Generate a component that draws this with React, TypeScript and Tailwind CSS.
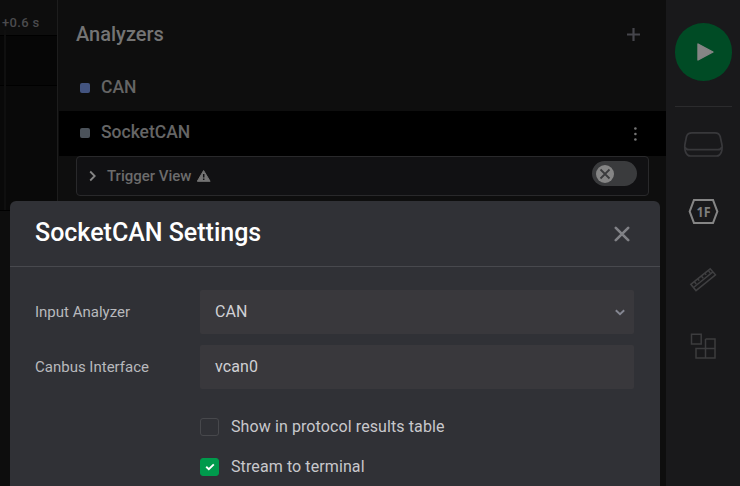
import React from "react";

function Timeline() {
  return (
    <div className="relative flex w-[57px] shrink-0 flex-col bg-[#0d0d0d]">
      <div className="h-[35px] pt-[14px] pl-[2px] text-[13px] leading-[17px] font-medium tracking-[0.35px] whitespace-nowrap text-[#4b4b4e]">
        +0.6 s
      </div>
      <div className="h-[51px] border-y border-black bg-[#060606]" />
      <div className="h-[125px] border-b border-black bg-[#090909]" />
      <div className="absolute top-[30px] left-[4px] h-[180px] w-[2px] bg-[#0f0f0f]" />
    </div>
  );
}

function AnalyzerRow({ name, swatch, selected }: { name: string; swatch: string; selected?: boolean }) {
  return (
    <div className={`flex h-[45px] items-center pl-[21px] pr-[29px] ${selected ? "bg-black" : ""}`}>
      <span className={`mb-px size-[10px] rounded-[2px] ${swatch}`} />
      <span className="ml-[11px] pb-[4px] text-[17.5px] leading-[24px] font-medium text-[#656565]">{name}</span>
      {selected && (
        <svg className="ml-auto" width="4" height="16" viewBox="0 0 4 16" fill="#747474">
          <circle cx="2.4" cy="2.5" r="1.3" />
          <circle cx="2.4" cy="8" r="1.3" />
          <circle cx="2.4" cy="13.5" r="1.3" />
        </svg>
      )}
    </div>
  );
}

function Analyzers() {
  return (
    <div className="flex w-[609px] shrink-0 flex-col border-l border-[#1d1d1d] bg-[#0e0e0e] pl-px">
      <div className="flex h-[66px] items-center justify-between pr-[26px] pl-[17px]">
        <h2 className="mt-[2px] text-[20px] leading-[28px] font-medium text-[#747474]">Analyzers</h2>
        <svg className="mt-[3px]" width="13" height="13" viewBox="0 0 13 13" stroke="#45454b" strokeWidth="2.2">
          <path d="M6.5 0V13M0 6.5H13" />
        </svg>
      </div>
      <AnalyzerRow name="CAN" swatch="bg-[#43547f]" />
      <AnalyzerRow name="SocketCAN" swatch="bg-[#4b525a]" selected />
      <div className="ml-[17px] flex h-[40px] w-[573px] items-center rounded-[4px] border border-[#29292b] bg-[#111113] pr-[11px] pl-[12px]">
        <svg width="8" height="12" viewBox="0 0 8 12" fill="none" stroke="#858585" strokeWidth="1.8">
          <path d="M1.2 1.5L5.7 6L1.2 10.5" />
        </svg>
        <span className="ml-[10px] text-[15px] leading-[20px] font-medium text-[#6c6c6c]">Trigger View</span>
        <svg className="mb-px ml-[5px]" width="14" height="12" viewBox="0 0 14 12">
          <path d="M6.6 .5L13.1 11.3H.3Z" fill="#747474" stroke="#747474" strokeLinejoin="round" />
          <path d="M6.7 4V7.6M6.7 8.6V10" stroke="#111113" strokeWidth="1.5" />
        </svg>
        <div className="mb-[5px] ml-auto flex h-[25px] w-[45px] items-center rounded-full bg-[#3a3b3d] pl-[4px]">
          <svg width="18" height="18" viewBox="0 0 18 18">
            <circle cx="9" cy="9" r="9" fill="#858585" />
            <path d="M4.5 4.5L13.5 13.5M13.5 4.5L4.5 13.5" stroke="#3a3b3d" strokeWidth="1.8" />
          </svg>
        </div>
      </div>
    </div>
  );
}

function Sidebar() {
  return (
    <div className="flex w-[74px] shrink-0 flex-col items-center bg-[#19191b] pt-[23px]">
      <div className="flex h-[58px] w-[57px] items-center justify-center rounded-full bg-[#004b25]">
        <svg className="ml-[4px]" width="17" height="18" viewBox="0 0 17 18">
          <path d="M1 1L16 9L1 17Z" fill="#858585" stroke="#858585" strokeWidth="1.4" strokeLinejoin="round" />
        </svg>
      </div>
      <div className="mt-[25px] h-px w-[57px] bg-[#2b2b2d]" />
      <svg className="mt-[24px]" width="40" height="26" viewBox="0 0 40 26" fill="none" stroke="#38383b" strokeWidth="1.7">
        <path d="M9 1.8H32C35 1.8 36.5 3 37.2 5.5L38.8 13C39.8 18 38.5 25 33.5 25H7.5C2.5 25 1.2 18 2 13L3.5 5.5C4.2 3 6 1.8 9 1.8Z" />
        <path d="M2 16C2.5 18 3.7 18.7 6 18.7H34.8C37.1 18.7 38.3 18 38.8 16" />
      </svg>
      <svg className="mt-[41px] ml-px" width="32" height="27" viewBox="0 0 32 27" fill="none" stroke="#858585">
        <path d="M6 2H25L29.3 13.5L25 25H6L1.7 13.5Z" strokeWidth="2.1" />
        <text x="15.5" y="19" textAnchor="middle" fill="#7d7d7d" stroke="none" className="font-['Noto_Sans',sans-serif] text-[15px] font-bold" textLength="14" lengthAdjust="spacingAndGlyphs">
          1F
        </text>
      </svg>
      <svg className="mt-[42px]" width="28" height="26" viewBox="0 0 28 26" fill="none" stroke="#3f3f41" strokeWidth="1.5">
        <path d="M1.8 17.3L21.2 1.8L26.5 7.8L7 23.6ZM4.5 20.5L23.9 4.9M5.2 14.5L7.2 17M8.7 11.7L10.2 13.6M12.2 8.8L14.2 11.3M15.7 6L17.2 7.9M19.2 3.4L21.2 5.9" />
      </svg>
      <svg className="mt-[40px]" width="26" height="26" viewBox="0 0 26 26" fill="none" stroke="#3c3c3e" strokeWidth="1.5">
        <path d="M1.5 1.3H11.2V11.1H1.5ZM15.5 6H25V25H6V15.5H25M15.5 6V25" />
      </svg>
    </div>
  );
}

function Field({ label, value, select }: { label: string; value: string; select?: boolean }) {
  return (
    <div className="flex items-center">
      <label className="w-[165px] text-[15px] leading-[20px] text-[#b8b9bd]">{label}</label>
      <div className="flex h-[44px] w-[434px] items-center justify-between rounded-[2px] bg-[#39383c] pr-[9px] pb-px pl-[15px] text-[16px] tracking-[0.1px] text-[#d0d0d4]">
        {value}
        {select && (
          <svg className="mt-px" width="10" height="7" viewBox="0 0 10 7" fill="none" stroke="#858792" strokeWidth="1.9">
            <path d="M.8 1.2L5 5.2L9.2 1.2" />
          </svg>
        )}
      </div>
    </div>
  );
}

function Check({ label, checked }: { label: string; checked?: boolean }) {
  return (
    <div className="ml-[165px] flex h-[20px] items-center">
      <span className={`flex h-[18px] w-[19px] items-center justify-center rounded-[3px] border ${checked ? "border-[#009a4c] bg-[#009a4c]" : "border-[#47484c]"}`}>
        {checked && (
          <svg width="10" height="8" viewBox="0 0 10 8" fill="none" stroke="white" strokeWidth="1.9">
            <path d="M1.2 3.8L3.8 6.2L8.8 1.4" />
          </svg>
        )}
      </span>
      <span className="ml-[12px] text-[16px] leading-[20px] tracking-[0.1px] text-[#c8c8cc]">{label}</span>
    </div>
  );
}

function SettingsDialog() {
  return (
    <div className="absolute top-[201px] left-[10px] h-[285px] w-[650px] overflow-hidden rounded-t-[6px] bg-[#303136]">
      <div className="flex h-[66px] items-center justify-between border-b border-[#48494e] pr-[30px] pb-[2px] pl-[25px]">
        <h1 className="text-[25px] leading-[32px] font-medium text-white">SocketCAN Settings</h1>
        <svg className="mt-[3px]" width="16" height="16" viewBox="0 0 16 16" stroke="#808186" strokeWidth="2.6" strokeLinecap="round">
          <path d="M1.8 1.8L14.2 14.2M14.2 1.8L1.8 14.2" />
        </svg>
      </div>
      <div className="flex flex-col gap-[11px] pt-[23px] pl-[25px]">
        <Field label="Input Analyzer" value="CAN" select />
        <Field label="Canbus Interface" value="vcan0" />
      </div>
      <div className="mt-[28px] flex flex-col gap-[20px] pl-[25px]">
        <Check label="Show in protocol results table" />
        <Check label="Stream to terminal" checked />
      </div>
    </div>
  );
}

export default function App() {
  return (
    <div className="relative flex h-[486px] w-[740px] overflow-hidden bg-[#0d0d0d] font-[Roboto,sans-serif]">
      <Timeline />
      <Analyzers />
      <Sidebar />
      <SettingsDialog />
    </div>
  );
}
